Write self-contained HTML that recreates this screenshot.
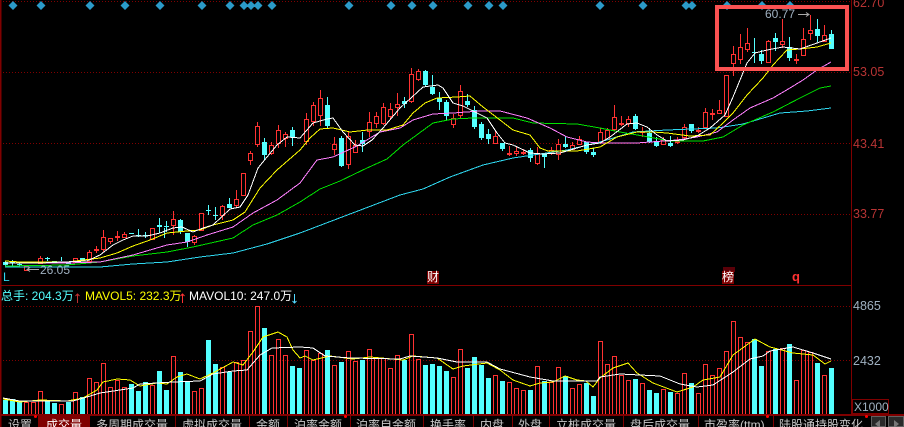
<!DOCTYPE html>
<html><head><meta charset="utf-8"><style>
html,body{margin:0;padding:0;background:#000}
#p{position:relative;width:904px;height:427px;overflow:hidden;background:#000;font-family:"Liberation Sans","Noto Sans CJK SC",sans-serif;font-size:12px;line-height:14px}
#p div{position:absolute;white-space:nowrap}
.ax{left:853px;color:#b83434;font-size:12.5px}
.gy{color:#9fb0c0}
.tb{top:418px;color:#c8c8c8;height:14px}
.sp{top:415px;width:1px;height:12px;background:#800000}
.dt{top:415px;width:3px;height:3px;background:#ff0000;border-radius:2px}
</style></head><body><div id="p">
<svg width="904" height="427" style="position:absolute;left:0;top:0" fill="none">
<g stroke="#800000" stroke-width="1" stroke-dasharray="1 2">
<path d="M3 1.5H851M3 72.5H851M3 143.5H851M3 214.5H851M3 306.5H851M3 360.5H851"/>
</g>
<path d="M0 0H1.5V427H0z" fill="#800000"/>
<path d="M851.5 0V414M0 285.5H851" stroke="#800000"/>
<g fill="#2b9bc9">
<path d="M13 1l4.5 4.5L13 10 8.500 5.500zM41 1l4.500 4.500L41 10 36.500 5.500zM90 1l4.500 4.500L90 10 85.500 5.500zM125 1l4.500 4.500L125 10 120.500 5.500zM160 1l4.500 4.500L160 10 155.500 5.500zM202 1l4.500 4.500L202 10 197.500 5.500zM230 1l4.500 4.500L230 10 225.500 5.500zM244 1l4.500 4.500L244 10 239.500 5.500zM251 1l4.500 4.500L251 10 246.500 5.500zM258 1l4.500 4.500L258 10 253.500 5.500zM272 1l4.500 4.500L272 10 267.500 5.500zM349 1l4.500 4.500L349 10 344.500 5.500zM391 1l4.500 4.500L391 10 386.500 5.500zM412 1l4.500 4.500L412 10 407.500 5.500zM433 1l4.500 4.500L433 10 428.500 5.500zM468 1l4.500 4.500L468 10 463.500 5.500zM489 1l4.500 4.500L489 10 484.500 5.500zM503 1l4.500 4.500L503 10 498.500 5.500zM600 1l4.500 4.500L600 10 595.500 5.500zM643 1l4.500 4.500L643 10 638.500 5.500zM686 1l4.500 4.500L686 10 681.500 5.500zM692 1l4.500 4.500L692 10 687.500 5.500zM727 1l4.500 4.500L727 10 722.500 5.500zM762 1l4.500 4.500L762 10 757.500 5.500zM790 1l4.500 4.500L790 10 785.500 5.500z"/>
</g>
<!-- volume -->
<path fill="#54ffff" d="M3 400h5v14h-5zM10 399h5v15h-5zM17 402h5v12h-5zM45 400h5v14h-5zM52 403h5v11h-5zM66 402h5v12h-5zM80 397h5v17h-5zM129 384h5v30h-5zM136 391h5v23h-5zM143 382h5v32h-5zM157 371h5v43h-5zM164 390h5v24h-5zM178 372h5v42h-5zM185 381h5v33h-5zM206 340h5v74h-5zM213 364h5v50h-5zM227 372h5v42h-5zM262 328h5v86h-5zM290 366h5v48h-5zM297 368h5v46h-5zM325 350h5v64h-5zM339 362h5v52h-5zM360 360h5v54h-5zM402 360h5v54h-5zM423 365h5v49h-5zM430 364h5v50h-5zM437 366h5v48h-5zM444 371h5v43h-5zM465 368h5v46h-5zM472 357h5v57h-5zM479 365h5v49h-5zM486 378h5v36h-5zM500 381h5v33h-5zM528 390h5v24h-5zM542 381h5v33h-5zM563 376h5v38h-5zM584 383h5v31h-5zM591 396h5v18h-5zM633 379h5v35h-5zM647 390h5v24h-5zM654 393h5v21h-5zM668 392h5v22h-5zM689 383h5v31h-5zM752 339h5v75h-5zM759 366h5v48h-5zM773 349h5v65h-5zM787 344h5v70h-5zM815 363h5v51h-5zM829 368h5v46h-5z"/>
<path stroke="#ff3232" transform="translate(0 .5)" d="M24.500 402h4v12h-4zM31.500 402h4v12h-4zM38.500 391h4v23h-4zM59.500 404h4v10h-4zM73.500 392h4v22h-4zM87.500 378h4v36h-4zM94.500 382h4v32h-4zM101.500 363h4v51h-4zM108.500 387h4v27h-4zM115.500 380h4v34h-4zM122.500 387h4v27h-4zM150.500 385h4v29h-4zM171.500 356h4v58h-4zM192.500 391h4v23h-4zM199.500 388h4v26h-4zM220.500 367h4v47h-4zM234.500 362h4v52h-4zM241.500 360h4v54h-4zM248.500 331h4v83h-4zM255.500 306h4v108h-4zM269.500 355h4v59h-4zM276.500 339h4v75h-4zM283.500 355h4v59h-4zM304.500 350h4v64h-4zM311.500 360h4v54h-4zM318.500 353h4v61h-4zM332.500 365h4v49h-4zM346.500 351h4v63h-4zM353.500 361h4v53h-4zM367.500 349h4v65h-4zM374.500 358h4v56h-4zM381.500 358h4v56h-4zM388.500 368h4v46h-4zM395.500 355h4v59h-4zM409.500 334h4v80h-4zM416.500 359h4v55h-4zM451.500 377h4v37h-4zM458.500 349h4v65h-4zM493.500 375h4v39h-4zM507.500 382h4v32h-4zM514.500 388h4v26h-4zM521.500 390h4v24h-4zM535.500 366h4v48h-4zM549.500 382h4v32h-4zM556.500 367h4v47h-4zM570.500 388h4v26h-4zM577.500 384h4v30h-4zM598.500 341h4v73h-4zM605.500 364h4v50h-4zM612.500 356h4v58h-4zM619.500 375h4v39h-4zM626.500 380h4v34h-4zM640.500 383h4v31h-4zM661.500 389h4v25h-4zM675.500 393h4v21h-4zM682.500 373h4v41h-4zM696.500 393h4v21h-4zM703.500 364h4v50h-4zM710.500 375h4v39h-4zM717.500 368h4v46h-4zM724.500 351h4v63h-4zM731.500 321h4v93h-4zM738.500 337h4v77h-4zM745.500 342h4v72h-4zM766.500 351h4v63h-4zM780.500 348h4v66h-4zM794.500 380h4v34h-4zM801.500 350h4v64h-4zM808.500 352h4v62h-4zM822.500 375h4v39h-4z"/>
<rect x="0" y="414" width="904" height="2" fill="#800000"/>
<g shape-rendering="crispEdges" stroke-width="1">
<polyline stroke="#ffff00" points="3,399 20,402 40,400 67,401 83,398 97,390 103,382 117,379 130,380 140,386 157,383 167,384 177,377 187,374 200,379 213,373 233,362 243,365 253,352 263,337 278,332 287,337 293,350 300,358 305,356 313,360 330,356 353,359 370,357 403,360 413,356 437,358 453,369 463,366 487,363 500,370 513,380 530,386 540,383 553,382 565,376 577,380 586,381 593,387 600,378 613,368 628,363 637,373 653,383 677,392 693,387 703,380 720,377 733,355 755,339 770,347 793,353 813,355 825,364 831,361"/>
<polyline stroke="#ffffff" points="3,398 20,401 73,401 87,397 100,393 133,388 140,384 173,382 200,381 213,374 233,371 247,370 260,355 272,348 300,347 313,348 325,356 350,358 400,359 410,356 437,358 457,362 487,362 500,369 530,377 553,381 597,381 600,377 620,374 660,376 680,384 697,387 713,385 733,372 750,359 763,356 770,351 793,347 813,353 831,359"/>
</g>
<!-- candle wicks -->
<path stroke="#ff3232" d="M26.500 265v6M40.500 256v8M89.500 250v11M96.500 246v7M103.500 230v22M110.500 238v6M117.500 231v10M124.500 232v6M152.500 228v11M173.500 211v24M194.500 235v10M201.500 213v17M222.500 205v15M236.500 190v18M243.500 173v22M250.500 151v14M257.500 122v25M271.500 142v13M278.500 125v23M285.500 132v15M306.500 113v32M313.500 102v24M320.500 90v36M334.500 137v18M348.500 132v37M355.500 140v12M369.500 112v25M376.500 112v16M383.500 103v22M390.500 103v17M397.500 93v23M411.500 68v35M418.500 69v12M453.500 114v14M460.500 85v34M495.500 131v13M509.500 146v10M516.500 147v9M523.500 149v6M537.500 147v18M551.500 147v8M558.500 139v21M572.500 142v8M579.500 136v9M600.500 128v16M607.500 128v12M614.500 105v26M621.500 116v10M628.500 116v11M642.500 127v10M663.500 137v8M677.500 137v7M684.500 124v15M698.500 127v6M705.500 108v20M712.500 109v11M719.500 100v14M726.500 75v41M733.500 46v30M740.500 34v30M747.500 28v24M768.500 40v23M782.500 19v29M796.500 54v10M803.500 28v28M810.500 15v25M824.500 25v17"/>
<path stroke="#54ffff" d="M5.500 261v5M12.500 260v6M19.500 263v4M61.500 257v4M47.500 257v4M138.500 229v8M145.500 232v6M164.500 228v10M159.500 218v15M166.500 221v11M180.500 219v15M187.500 233v14M208.500 205v10M215.500 207v13M229.500 198v10M264.500 138v22M292.500 127v19M327.500 97v32M341.500 136v31M362.500 132v20M404.500 97v11M425.500 70v16M432.500 75v20M439.500 92v18M446.500 100v21M467.500 94v13M474.500 106v23M481.500 122v18M488.500 129v15M502.500 143v8M530.500 148v14M544.500 153v15M565.500 136v12M586.500 142v12M593.500 148v9M635.500 114v16M649.500 128v15M656.500 137v10M670.500 136v11M691.500 124v9M754.500 38v25M761.500 50v14M775.500 33v18M789.500 37v24M817.500 19v23M831.500 30v19"/>
<!-- candle bodies -->
<path fill="#000" stroke="#ff3232" transform="translate(0 .5)" d="M24.500 266h4v4h-4zM38.500 258h4v5h-4zM73.500 258h4v4h-4zM87.500 252h4v9h-4zM94.500 249h4v1h-4zM101.500 237h4v12h-4zM108.500 238h4v3h-4zM115.500 236h4v1h-4zM122.500 234h4v3h-4zM150.500 228h4v11h-4zM171.500 219h4v6h-4zM192.500 236h4v6h-4zM199.500 213h4v17h-4zM220.500 206h4v9h-4zM234.500 199h4v6h-4zM241.500 173h4v22h-4zM248.500 153h4v7h-4zM255.500 126h4v18h-4zM269.500 145h4v8h-4zM276.500 130h4v13h-4zM283.500 134h4v4h-4zM304.500 119h4v22h-4zM311.500 105h4v16h-4zM318.500 98h4v17h-4zM332.500 144h4v5h-4zM346.500 136h4v28h-4zM353.500 145h4v7h-4zM367.500 122h4v9h-4zM374.500 116h4v7h-4zM381.500 107h4v16h-4zM388.500 109h4v7h-4zM395.500 104h4v3h-4zM409.500 74h4v27h-4zM416.500 71h4v8h-4zM451.500 118h4v6h-4zM458.500 91h4v24h-4zM493.500 136h4v7h-4zM507.500 153h4v1h-4zM514.500 151h4v2h-4zM521.500 152h4v1h-4zM535.500 154h4v9h-4zM549.500 150h4v2h-4zM556.500 144h4v10h-4zM570.500 145h4v4h-4zM577.500 139h4v5h-4zM598.500 132h4v10h-4zM605.500 130h4v9h-4zM612.500 117h4v12h-4zM619.500 123h4v1h-4zM626.500 119h4v4h-4zM640.500 131h4v1h-4zM661.500 140h4v4h-4zM675.500 141h4v1h-4zM682.500 127h4v10h-4zM696.500 130h4v1h-4zM703.500 112h4v15h-4zM710.500 113h4v1h-4zM717.500 110h4v3h-4zM724.500 75h4v41h-4zM731.500 54h4v9h-4zM738.500 47h4v12h-4zM745.500 43h4v6h-4zM766.500 41h4v21h-4zM780.500 41h4v3h-4zM794.500 59h4v1h-4zM801.500 39h4v16h-4zM808.500 30h4v3h-4zM822.500 35h4v6h-4z"/>
<path fill="#54ffff" d="M3 262h5v3h-5zM10 262h5v1h-5zM17 264h5v1h-5zM45 258h5v1h-5zM52 261h5v2h-5zM66 262h5v2h-5zM80 258h5v3h-5zM129 233h5v1h-5zM136 235h5v1h-5zM143 235h5v1h-5zM157 225h5v2h-5zM164 226h5v1h-5zM178 220h5v12h-5zM185 233h5v9h-5zM206 210h5v1h-5zM213 215h5v1h-5zM227 204h5v4h-5zM262 142h5v13h-5zM290 130h5v7h-5zM325 105h5v21h-5zM339 138h5v28h-5zM360 140h5v4h-5zM402 101h5v3h-5zM423 71h5v14h-5zM430 87h5v7h-5zM437 98h5v4h-5zM444 102h5v14h-5zM465 101h5v4h-5zM472 110h5v17h-5zM479 124h5v14h-5zM486 134h5v5h-5zM500 143h5v6h-5zM528 150h5v8h-5zM542 153h5v4h-5zM563 144h5v3h-5zM584 142h5v10h-5zM591 152h5v3h-5zM633 116h5v13h-5zM647 133h5v9h-5zM654 142h5v4h-5zM668 143h5v3h-5zM689 124h5v7h-5zM752 52h5v1h-5zM759 54h5v7h-5zM773 38h5v4h-5zM787 47h5v11h-5zM815 29h5v7h-5zM829 34h5v15h-5z"/>
<!-- MA lines -->
<g shape-rendering="crispEdges" stroke-width="1">
<polyline stroke="#2fd8f0" points="5,267 100,267 133,264 167,262 200,257 233,253 267,244 300,233 350,214 400,195 423,189 450,177 483,165 513,158 533,155 567,150 600,142 633,132 667,130 717,128 743,124 780,113 807,111 831,108"/>
<polyline stroke="#00e000" points="5,266 67,265 100,262 133,256 167,252 193,247 233,238 253,225 277,215 300,202 320,189 340,181 367,168 387,159 403,145 433,123 453,119 473,118 513,118 533,123 577,124 600,128 620,132 643,136 670,141 703,141 723,137 743,125 773,112 800,98 820,88 831,86"/>
<polyline stroke="#ff80ff" points="5,263 67,263 100,262 133,255 167,245 187,242 207,235 233,227 253,213 277,200 300,183 317,160 333,157 357,146 380,132 400,128 413,120 433,114 453,113 480,111 500,111 527,118 550,128 567,137 587,142 600,143 617,143 637,143 650,142 677,140 697,137 717,132 733,120 750,108 773,98 790,88 803,80 817,70 831,62"/>
<polyline stroke="#ffff00" points="5,261 20,262 67,262 100,258 117,253 133,246 150,240 167,233 187,231 200,230 213,225 233,220 245,212 260,188 277,170 300,150 310,138 320,129 333,128 350,132 368,130 387,130 403,125 413,113 425,103 437,98 457,97 470,96 483,107 500,120 513,130 530,135 540,148 548,151 577,151 600,147 617,137 637,132 653,132 667,133 690,136 710,135 723,123 733,113 747,95 763,78 773,65 787,50 800,49 817,47 831,43"/>
<polyline stroke="#ffffff" points="5,263 40,263 87,261 100,255 113,245 123,240 133,236 147,236 160,233 173,228 182,227 193,232 203,228 213,225 230,209 240,207 248,195 258,168 267,157 277,145 287,137 300,138 313,123 327,119 333,118 343,132 355,145 363,146 372,140 383,128 400,108 423,87 438,85 443,88 453,103 463,106 487,118 497,133 505,143 513,145 530,153 543,154 560,153 577,148 587,145 600,143 610,137 627,124 637,123 647,127 657,135 667,141 683,140 697,136 710,128 725,115 733,97 740,80 747,63 755,53 767,50 783,47 800,49 817,43 831,38"/>
</g>
<!-- highlight box -->
<rect x="717" y="7" width="130" height="62" stroke="#fb5252" stroke-width="4"/>
<!-- price arrows -->
<path d="M798 14.500H809M806 12.500l3 2-3 2" stroke="#a8a8a8"/>
<path d="M27 269.500H39M30 267.500l-3 2 3 2" stroke="#a8a8a8"/>
<path d="M77.500 303V294M75.500 296l2-2 2 2" stroke="#c03030"/>
<path d="M182.500 303V294M180.500 296l2-2 2 2" stroke="#ff3232"/>
<path d="M294.500 294V303M292.500 301l2 2 2-2" stroke="#54d8ff"/>
</svg>
<div class="gy" style="left:765px;top:7px">60.77</div>
<div class="gy" style="left:40px;top:263px">26.05</div>
<div style="left:3px;top:270px;color:#2fd8f0">L</div>
<div style="left:427px;top:271px;width:12px;height:13px;background:#800000;color:#fff;line-height:13px">财</div>
<div style="left:723px;top:267px;width:12px;height:5px;background:#5a0008"></div>
<div style="left:722px;top:271px;width:12px;height:13px;background:#800000;color:#fff;line-height:13px">榜</div>
<div style="left:792px;top:270px;color:#ff3232;font-weight:bold;font-size:13px">q</div>
<div class="ax" style="top:-4px">62.70</div>
<div class="ax" style="top:65px">53.05</div>
<div class="ax" style="top:137px">43.41</div>
<div class="ax" style="top:207px">33.77</div>
<div class="gy" style="left:853px;top:299px;font-size:12.5px">4865</div>
<div class="gy" style="left:853px;top:354px;font-size:12.5px">2432</div>
<div class="gy" style="left:852px;top:399px;border:1px solid #800000;box-sizing:content-box;padding-left:1px;font-size:12px;height:13px;width:34px">X1000</div>
<div style="left:1px;top:289px;color:#54ffff">总手: 204.3万</div>
<div style="left:85px;top:289px;color:#ffff00">MAVOL5: 232.3万</div>
<div style="left:189px;top:289px;color:#ffffff">MAVOL10: 247.0万</div>
<div style="left:39px;top:415px;width:50px;height:12px;background:#800000"></div>
<div class="tb" style="left:8px">设置</div><div class="dt" style="left:34px"></div>
<div class="tb" style="left:46px;color:#fff">成交量</div>
<div class="tb" style="left:96px">多周期成交量</div>
<div class="tb" style="left:182px">虚拟成交量</div>
<div class="tb" style="left:256px">金额</div>
<div class="tb" style="left:294px">泊率金额</div><div class="dt" style="left:344px"></div>
<div class="tb" style="left:356px">泊率自金额</div>
<div class="tb" style="left:430px">换手率</div>
<div class="tb" style="left:480px">内盘</div>
<div class="tb" style="left:518px">外盘</div>
<div class="tb" style="left:556px">立桩成交量</div>
<div class="tb" style="left:630px">盘后成交量</div>
<div class="tb" style="left:704px">市盈率(ttm)</div><div class="dt" style="left:766px"></div>
<div class="tb" style="left:779px">陆股通持股变化</div><div class="dt" style="left:865px"></div>
<div class="sp" style="left:38px"></div><div class="sp" style="left:89px"></div><div class="sp" style="left:175px"></div><div class="sp" style="left:249px"></div><div class="sp" style="left:287px"></div><div class="sp" style="left:350px"></div><div class="sp" style="left:423px"></div><div class="sp" style="left:473px"></div><div class="sp" style="left:512px"></div><div class="sp" style="left:549px"></div><div class="sp" style="left:623px"></div><div class="sp" style="left:698px"></div><div class="sp" style="left:773px"></div>
<div style="left:871px;top:416px;width:15px;height:11px;background:#2a2a2a;border:1px solid #606060;box-sizing:border-box"></div>
<div style="left:888px;top:416px;width:16px;height:11px;background:#2a2a2a;border:1px solid #606060;box-sizing:border-box"></div>
<div style="left:875px;top:420px;width:0;height:0;border:4px solid transparent;border-right:5px solid #777;border-left:0"></div>
<div style="left:894px;top:420px;width:0;height:0;border:4px solid transparent;border-left:5px solid #777;border-right:0"></div>
</div></body></html>
